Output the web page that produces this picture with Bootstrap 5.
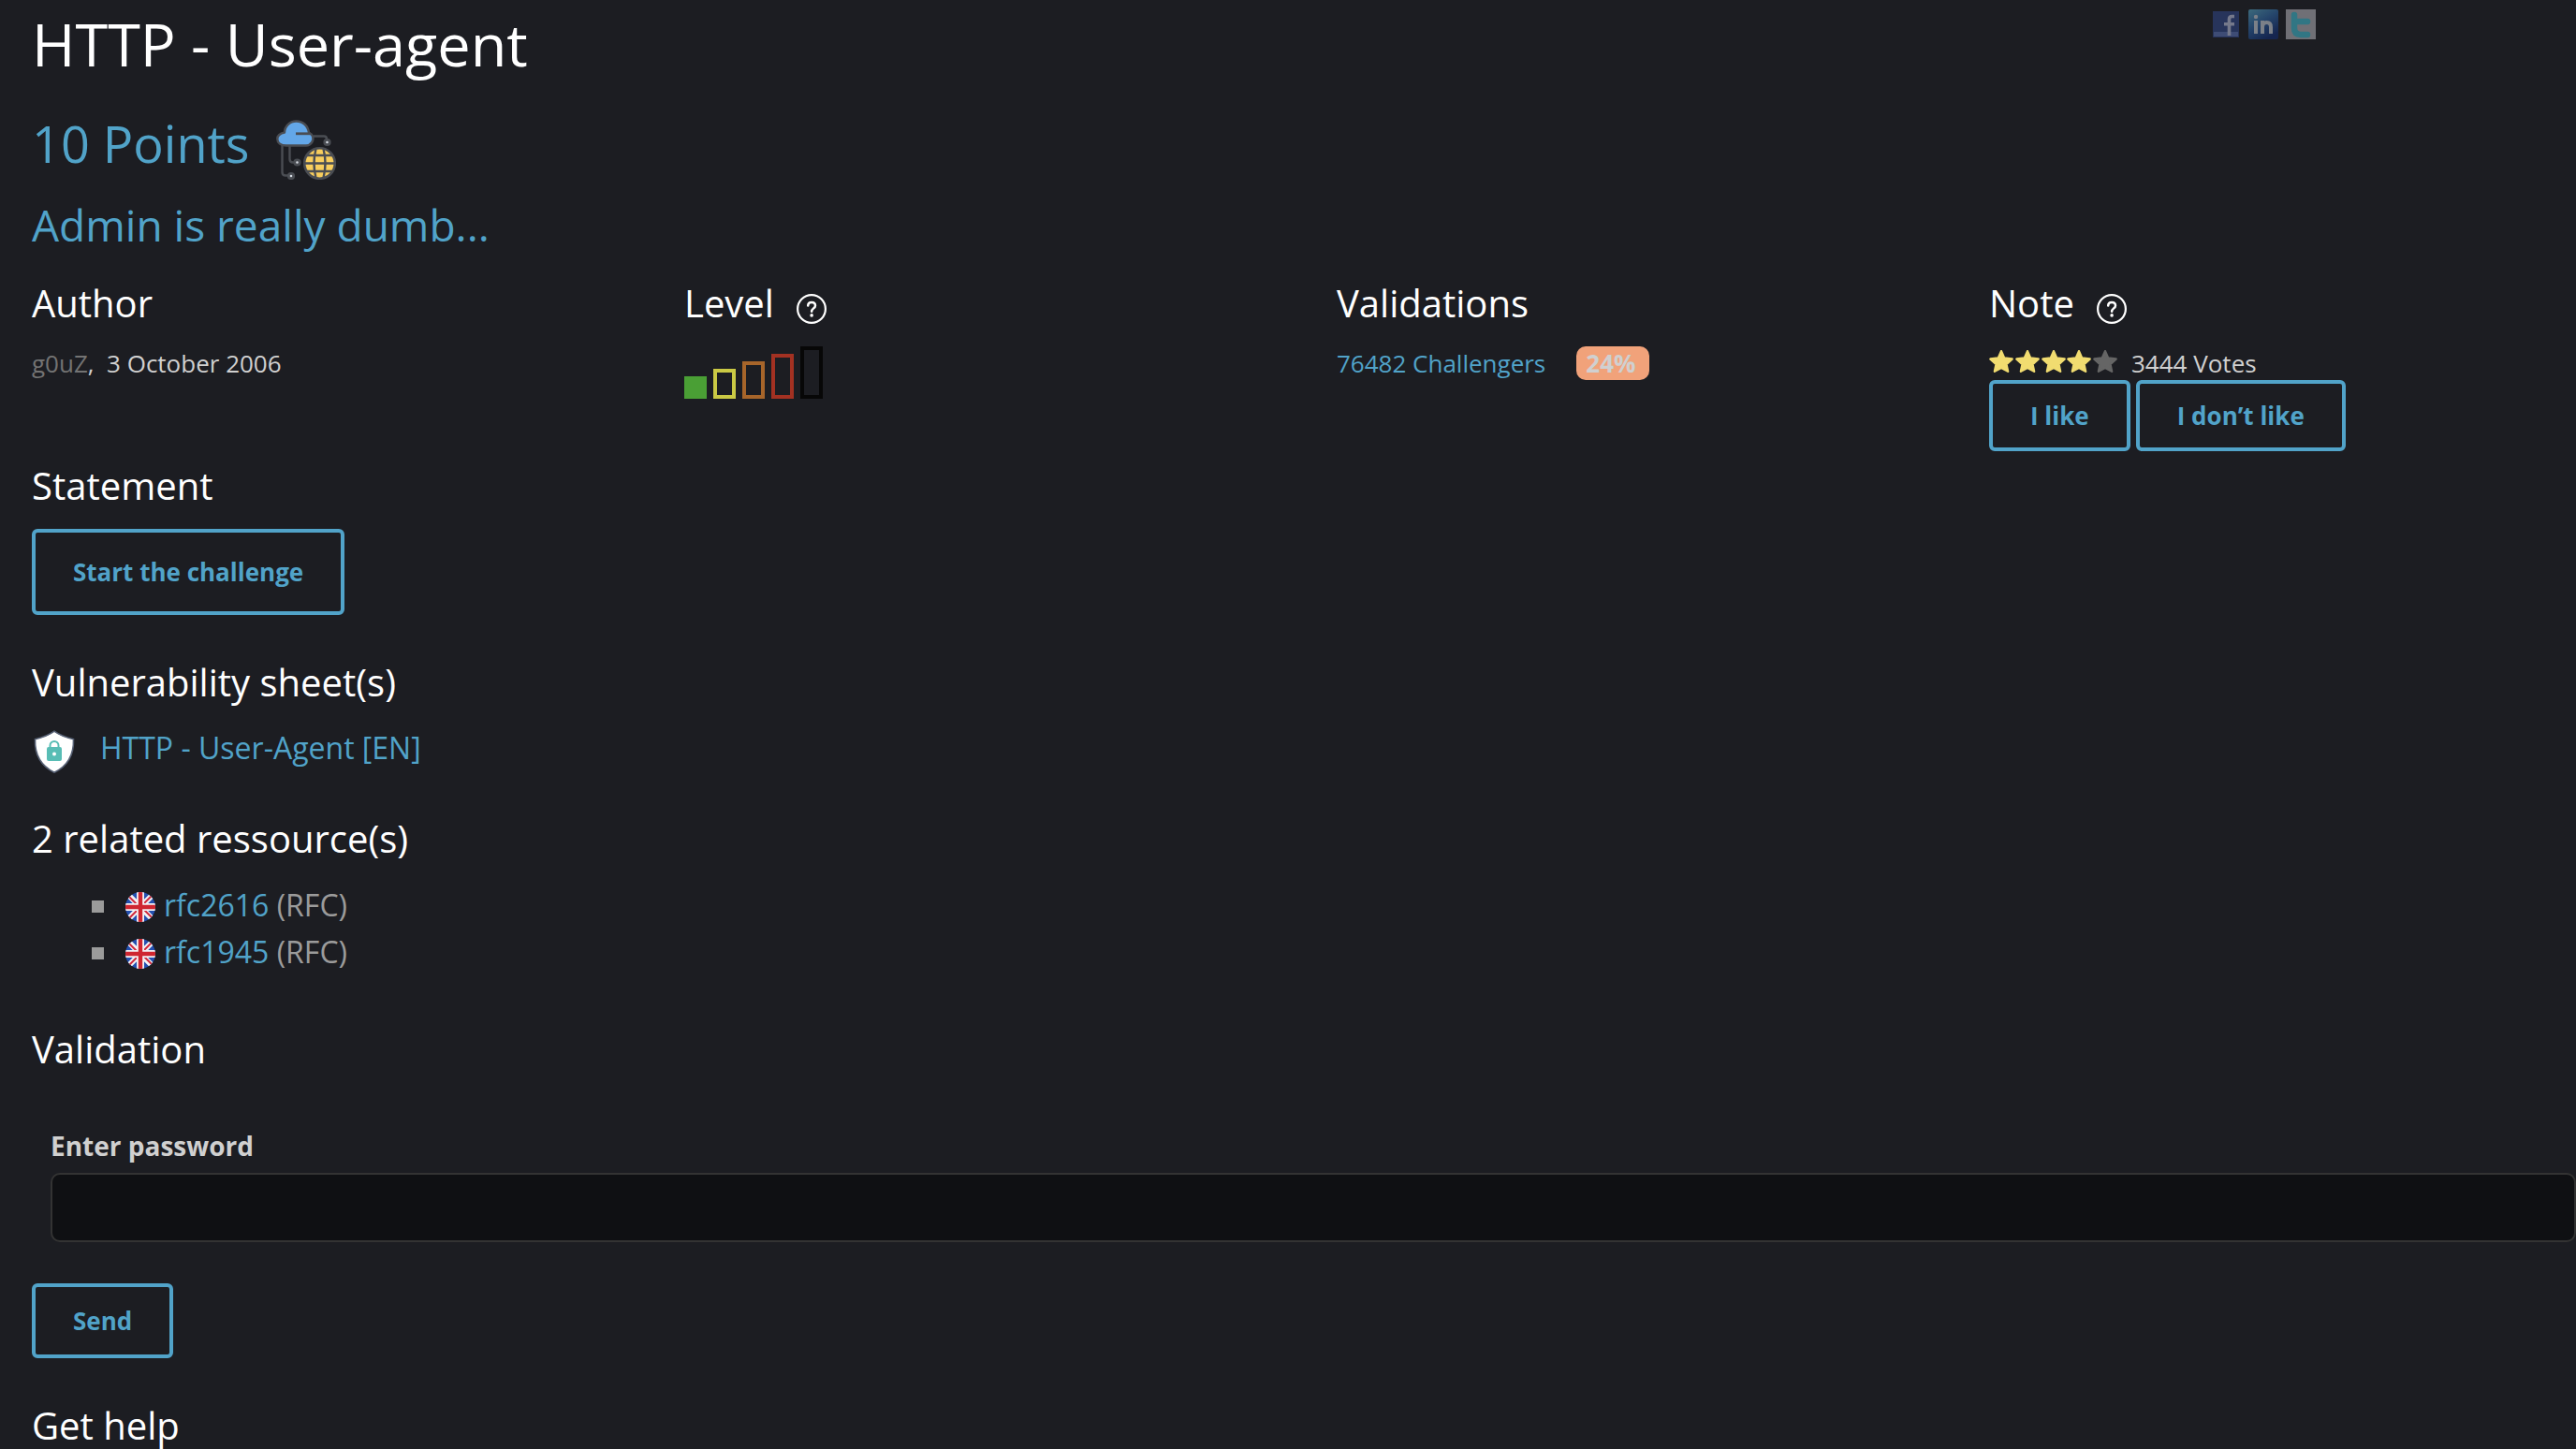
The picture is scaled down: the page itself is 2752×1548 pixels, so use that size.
<!DOCTYPE html>
<html lang="en">
<head>
<meta charset="utf-8">
<meta name="viewport" content="width=device-width, initial-scale=1">
<title>HTTP - User-agent</title>
<link rel="stylesheet" href="https://cdn.jsdelivr.net/npm/bootstrap@5.3.0/dist/css/bootstrap.min.css">
<style>
:root{--page:#1c1d22;--accent:#51a3c9;}
body{background:var(--page);color:#d0d0d0;font:400 26px/36px "Open Sans","Noto Sans",sans-serif;overflow-x:hidden}
a{color:var(--accent);text-decoration:none}
.page{padding:8px 0 0 34px}
h1,h2,h3{color:#fff;font-weight:400;margin:0}
h1{font-size:63px;line-height:78px}
.points{font-size:54px;line-height:78px;color:var(--accent)}
.points-line{margin-top:28px;gap:29px}
.teaser{font-size:46px;line-height:64px;color:var(--accent);margin:16px 0 24px}
h3{font-size:40px;line-height:56px;margin-bottom:18px}
.share{gap:8px;margin:2px 278px 0 0}
.share svg{display:block}
.facts{--bs-gutter-x:70px;margin-bottom:9px}
.help{width:32px;height:32px;margin:11px 0 0 24px}
.author{color:#737373}
.bars{gap:7px;height:56px}
.bars span{width:24px;border:4px solid}
.rate{background:#f1a27a;color:#d0d0d0;border-radius:10px;padding:0 15px 0 10px;margin-left:33px;font-weight:700}
.stars{width:138px;height:24px;margin:4px 14px 0 0}
.votes{gap:6px}
.btn-line{border:4px solid var(--accent);border-radius:6px;color:var(--accent);font-weight:700;font-size:26px;line-height:36px;padding:16px 40px}
.btn-line:hover{background:var(--accent);color:var(--page)}
.btn-start{padding:24px 40px}
.btn-send{padding:18px 40px}
.block{margin-bottom:44px}
.sheets{margin-bottom:45px}
.wide{font-size:32px;line-height:48px}
.sheet{gap:26px}
.shield{margin-top:4px;margin-bottom:-4px}
.refs{list-style:none;margin:0 0 51px;padding:0 0 0 64px;font-size:32px;line-height:50px;color:#9b9b9b}
.refs li{gap:9px}
.refs li::before{content:"";width:13px;height:13px;background:#9b9b9b;margin:2px 14px 0 0}
.flag{width:32px;height:32px;margin-top:4px;border-radius:50%}
.pass{padding-left:20px;margin-top:55px}
.pass label{font-size:28px;line-height:40px;font-weight:700;margin-bottom:9px}
.pass input,.pass input:focus{background:#0f1013;border:2px solid #333;border-radius:10px;height:74px;color:#d0d0d0;font-size:28px}
</style>
</head>
<body>
<svg class="d-none" aria-hidden="true">
  <symbol id="q" viewBox="0 0 32 32"><circle cx="16" cy="16" r="14.9" fill="none" stroke="#fff" stroke-width="2.2"/><path d="M12.2 12.6c0-2.2 1.6-3.7 3.9-3.7s3.900 1.400 3.900 3.500c0 3-3.900 3-3.900 6.400" fill="none" stroke="#fff" stroke-width="2.500" stroke-linecap="round"/><circle cx="16.100" cy="22.900" r="1.800" fill="#fff"/></symbol>
  <symbol id="uk" viewBox="0 0 32 32"><path fill="#2450b0" d="M0 0h32v32H0z"/><path d="M2 2l28 28M30 2L2 30" stroke="#f2f2f4" stroke-width="6"/><path d="M2 3l11 11M19 18l11 11M29 3L18 14M14 18L3 29" stroke="#d0273a" stroke-width="1.8"/><path d="M16 0v32M0 16h32" stroke="#f2f2f4" stroke-width="8"/><path d="M16 0v32M0 16h32" stroke="#cf2630" stroke-width="4.4"/></symbol>
  <symbol id="star" viewBox="0 0 26 24"><path d="M13 1.2l3.200 7.300 8.400 1-6.100 5.700 1.600 7.600-7.100-3.800-7.100 3.800 1.600-7.600-6.100-5.700 8.400-1z" fill="currentColor" stroke="currentColor" stroke-width="2.400" stroke-linejoin="round"/></symbol>
</svg>

<main class="container-fluid page">
  <header class="d-flex justify-content-between align-items-start">
    <h1>HTTP - User-agent</h1>
    <nav class="share d-flex" aria-label="Share">
      <a href="#" aria-label="Facebook"><svg width="32" height="32" viewBox="0 0 32 32"><path fill="#27345b" d="M2 2h28v28H2z"/><path fill="#3e4c75" d="M3 24h26v5H3z"/><path d="M25 7.500h-2.500q-3 0-3 3V28M14 15.700h11" fill="none" stroke="#75798b" stroke-width="3.600"/></svg></a>
      <a href="#" aria-label="LinkedIn"><svg width="32" height="32" viewBox="0 0 32 32"><defs><linearGradient id="li" x1="0" y1="0" x2=".6" y2="1"><stop offset="0" stop-color="#3d6a7c"/><stop offset=".5" stop-color="#25456b"/><stop offset="1" stop-color="#15254f"/></linearGradient></defs><rect width="32" height="32" rx="2" fill="url(#li)"/><path d="M8 12v14M15 26V12m0 7q0-5 4.500-5t4.500 5v7" fill="none" stroke="#7b8088" stroke-width="4"/><circle cx="8" cy="8" r="2.200" fill="#7b8088"/></svg></a>
      <a href="#" aria-label="Twitter"><svg width="32" height="32" viewBox="0 0 32 32"><path fill="#707076" d="M0 0h32v32H0z"/><path d="M9 6v14q0 7 7 7h7M9 13h14" fill="none" stroke="#317684" stroke-width="6.500" stroke-linecap="round"/></svg></a>
    </nav>
  </header>

  <div class="points-line d-flex align-items-end">
    <h2 class="points">10 Points</h2>
    <svg width="64" height="64" viewBox="0 0 64 64" fill="none" stroke="#4a4d53" stroke-width="2.400" stroke-linejoin="round" aria-hidden="true">
      <path d="M6.500 26v30q0 3.500 3.500 3.500h3M14.500 26v16q0 3.500 3.500 3.500h2M40 17.500h11q3 0 3 3v3"/>
      <path d="M11 27.500h21a7.500 7.500 0 0 0 7-10q-1-2.500-4-3.500C34 6 28.500 1.500 21.500 1.500S9 7 9 13.500C4 14.500 1.300 17 1.300 20.500c0 4 3.500 7 9.700 7z" fill="#63a7e8"/>
      <path d="M21 14.800h16" stroke-width="2.800"/>
      <g fill="#d6dbe2" stroke-width="2.800"><circle cx="54.500" cy="24" r="2.700"/><circle cx="22.500" cy="45.500" r="2.700"/><circle cx="16" cy="60" r="2.700"/></g>
      <circle cx="46.500" cy="46.500" r="16.300" fill="#f8ce5d" stroke-width="2.600"/>
      <path d="M30 46.500h33M33 38h27M33 55h27M42.500 31q-4 15.500 0 31M50.500 31q4 15.500 0 31"/>
    </svg>
  </div>
  <p class="teaser">Admin is really dumb...</p>

  <div class="row facts">
    <section class="col-3">
      <h3>Author</h3>
      <div><span class="author">g0uZ</span>,&nbsp; 3 October 2006</div>
    </section>
    <section class="col-3">
      <h3 class="d-flex align-items-center">Level<svg class="help" role="img" aria-label="Help"><use href="#q"/></svg></h3>
      <div class="bars d-flex align-items-end" role="img" aria-label="Very easy">
        <span style="height:24px;color:#4a9f35;background:#4a9f35"></span><span style="height:32px;color:#cac944"></span><span style="height:40px;color:#a7652a"></span><span style="height:48px;color:#a33122"></span><span style="height:56px;color:#070707"></span>
      </div>
    </section>
    <section class="col-3">
      <h3>Validations</h3>
      <div class="d-flex"><a href="#">76482 Challengers</a><span class="rate">24%</span></div>
    </section>
    <section class="col-3">
      <h3 class="d-flex align-items-center">Note<svg class="help" role="img" aria-label="Help"><use href="#q"/></svg></h3>
      <div class="d-flex">
        <svg class="stars" viewBox="0 0 138 24" role="img" aria-label="4 out of 5"><g color="#f1dc70"><use href="#star" width="26" height="24"/><use href="#star" x="28" width="26" height="24"/><use href="#star" x="56" width="26" height="24"/><use href="#star" x="83" width="26" height="24"/></g><use href="#star" x="111" width="26" height="24" color="#656565"/></svg>
        <span>3444 Votes</span>
      </div>
      <div class="votes d-flex"><button class="btn btn-line" type="button">I like</button><button class="btn btn-line" type="button">I don’t like</button></div>
    </section>
  </div>

  <section class="block">
    <h3>Statement</h3>
    <div class="d-flex"><button class="btn btn-line btn-start" type="button">Start the challenge</button></div>
  </section>

  <section class="sheets">
    <h3>Vulnerability sheet(s)</h3>
    <div class="sheet wide d-flex align-items-center">
      <svg class="shield" width="47" height="48" viewBox="0 0 47 48" aria-hidden="true"><path d="M24 5.200c6 4.500 12 6.500 20.500 8.500.5 16-5 28-20.500 35.500C8.500 41.500 3 29.500 3.500 13.700 12 11.700 18 9.700 24 5.200z" transform="translate(0 -3)" fill="#fff" stroke="#566074" stroke-width="1.600"/><rect x="16" y="19" width="16" height="15" rx="2" fill="#58bdb5"/><path d="M19.500 20v-2.500a4.500 4.500 0 0 1 9 0V20" fill="none" stroke="#58bdb5" stroke-width="2"/><circle cx="24" cy="26.500" r="2" fill="#fff"/></svg>
      <a href="#">HTTP - User-Agent [EN]</a>
    </div>
  </section>

  <section>
    <h3>2 related ressource(s)</h3>
    <ul class="refs">
      <li class="d-flex align-items-center"><svg class="flag" role="img" aria-label="English"><use href="#uk"/></svg><span><a href="#">rfc2616</a> (RFC)</span></li>
      <li class="d-flex align-items-center"><svg class="flag" role="img" aria-label="English"><use href="#uk"/></svg><span><a href="#">rfc1945</a> (RFC)</span></li>
    </ul>
  </section>

  <form class="block">
    <h3>Validation</h3>
    <div class="pass block">
      <label class="d-block" for="password">Enter password</label>
      <input class="form-control" type="text" id="password" autocomplete="off">
    </div>
    <div class="d-flex"><button class="btn btn-line btn-send" type="submit">Send</button></div>
  </form>

  <h3 class="mb-0">Get help</h3>
</main>
<script src="https://cdn.jsdelivr.net/npm/bootstrap@5.3.0/dist/js/bootstrap.bundle.min.js"></script>
</body>
</html>
